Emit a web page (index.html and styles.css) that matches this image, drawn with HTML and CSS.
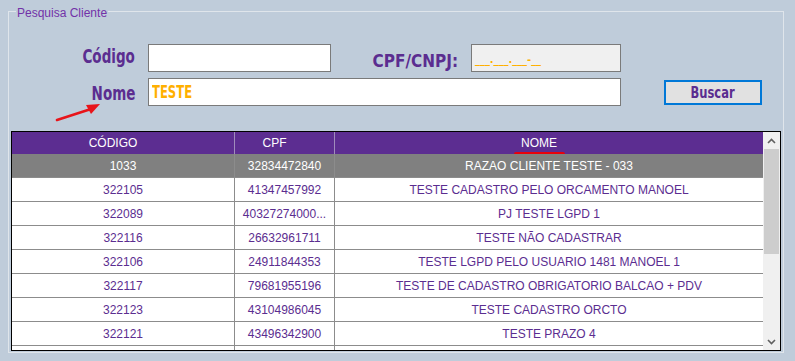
FILE: index.html
```html
<!DOCTYPE html>
<html lang="pt-BR">
<head>
<meta charset="utf-8">
<title>Pesquisa Cliente</title>
<link rel="stylesheet" href="styles.css">
</head>
<body>
<fieldset class="group">
  <legend class="group-title">Pesquisa Cliente</legend>
  <div class="form">
    <label class="lbl lbl-code"><span class="narrow">Código</span></label>
    <div class="input input-code"></div>
    <label class="lbl lbl-cpf"><span class="narrow-cpf">CPF/CNPJ:</span></label>
    <div class="input input-cpf"><span class="mask">___.___.___-__</span></div>
    <label class="lbl lbl-name"><span class="narrow">Nome</span></label>
    <div class="input input-name"><span class="value">TESTE</span></div>
    <button class="btn" type="button"><span class="btn-text">Buscar</span></button>
    <svg class="arrow" width="50" height="22" viewBox="0 0 50 22" aria-hidden="true">
      <line x1="2" y1="19" x2="36" y2="8" stroke="#e8141a" stroke-width="2.6" stroke-linecap="round"/>
      <polygon points="45,3 31,4 36,13" fill="#e8141a"/>
    </svg>
  </div>
  <div class="grid">
    <div class="grid-main">
      <div class="grid-head">
        <div class="cell c1">CÓDIGO</div>
        <div class="cell c2">CPF</div>
        <div class="cell c3"><span class="sorted">NOME</span></div>
      </div>
      <div class="grid-row selected">
        <div class="cell c1">1033</div>
        <div class="cell c2">32834472840</div>
        <div class="cell c3">RAZAO CLIENTE TESTE - 033</div>
      </div>
      <div class="grid-row">
        <div class="cell c1">322105</div>
        <div class="cell c2">41347457992</div>
        <div class="cell c3">TESTE CADASTRO PELO ORCAMENTO MANOEL</div>
      </div>
      <div class="grid-row">
        <div class="cell c1">322089</div>
        <div class="cell c2">40327274000...</div>
        <div class="cell c3">PJ TESTE LGPD 1</div>
      </div>
      <div class="grid-row">
        <div class="cell c1">322116</div>
        <div class="cell c2">26632961711</div>
        <div class="cell c3">TESTE NÃO CADASTRAR</div>
      </div>
      <div class="grid-row">
        <div class="cell c1">322106</div>
        <div class="cell c2">24911844353</div>
        <div class="cell c3">TESTE LGPD PELO USUARIO 1481 MANOEL 1</div>
      </div>
      <div class="grid-row">
        <div class="cell c1">322117</div>
        <div class="cell c2">79681955196</div>
        <div class="cell c3">TESTE DE CADASTRO OBRIGATORIO BALCAO + PDV</div>
      </div>
      <div class="grid-row">
        <div class="cell c1">322123</div>
        <div class="cell c2">43104986045</div>
        <div class="cell c3">TESTE CADASTRO ORCTO</div>
      </div>
      <div class="grid-row">
        <div class="cell c1">322121</div>
        <div class="cell c2">43496342900</div>
        <div class="cell c3">TESTE PRAZO 4</div>
      </div>
      <div class="grid-row">
        <div class="cell c1"></div>
        <div class="cell c2"></div>
        <div class="cell c3"></div>
      </div>
    </div>
    <div class="scrollbar">
      <div class="sb-btn">
        <svg width="9" height="6" viewBox="0 0 9 6" aria-hidden="true"><polyline points="1,5 4.5,1.5 8,5" fill="none" stroke="#606060" stroke-width="1.6"/></svg>
      </div>
      <div class="sb-track"><div class="sb-thumb"></div></div>
      <div class="sb-btn">
        <svg width="9" height="6" viewBox="0 0 9 6" aria-hidden="true"><polyline points="1,1 4.5,4.5 8,1" fill="none" stroke="#606060" stroke-width="1.6"/></svg>
      </div>
    </div>
  </div>
</fieldset>
</body>
</html>
```

FILE: styles.css
```css
html, body {
  margin: 0;
  padding: 0;
}

body {
  width: 795px;
  height: 361px;
  overflow: hidden;
  background: #bfccda;
  padding-top: 3px;
  box-sizing: border-box;
  font-family: "Liberation Sans", Arial, sans-serif;
}

.group {
  margin: 0 11px 0 8px;
  padding: 25px 2px 1px 2px;
  border: 1px solid #dfe5eb;
  min-width: 0;
}

.group-title {
  margin-left: 5px;
  padding: 4px 1px 0 1px;
  line-height: 12px;
  font-size: 12px;
  color: #7232a8;
}

.form {
  position: relative;
  display: grid;
  grid-template-columns: 124px 183px 114px 150px 98px;
  grid-template-rows: 28px 28px;
  column-gap: 13px;
  row-gap: 6px;
  align-items: center;
}

.lbl {
  font-family: "DejaVu Sans Condensed", "DejaVu Sans", sans-serif;
  font-weight: bold;
  color: #5b2d90;
  text-align: right;
  font-size: 20px;
  line-height: 24px;
}

.narrow {
  display: inline-block;
  transform: scaleX(0.75);
  transform-origin: right center;
}

.narrow-cpf {
  display: inline-block;
  font-size: 17px;
}

.lbl-code {
  grid-column: 1;
  grid-row: 1;
  margin-top: -4px;
}

.lbl-name {
  grid-column: 1;
  grid-row: 2;
  margin-top: 2px;
}

.lbl-cpf {
  grid-column: 3;
  grid-row: 1;
  margin-top: 4px;
}

.input {
  height: 28px;
  box-sizing: border-box;
  border: 1px solid #7a7a7a;
  background: #ffffff;
  display: flex;
  align-items: center;
  padding-left: 3px;
}

.input-code {
  grid-column: 2;
  grid-row: 1;
}

.input-cpf {
  grid-column: 4;
  grid-row: 1;
  background: #f0f0f0;
}

.input-name {
  grid-column: 2 / span 3;
  grid-row: 2;
}

.value {
  display: inline-block;
  font-family: "DejaVu Sans Condensed", "DejaVu Sans", sans-serif;
  font-weight: bold;
  font-size: 17px;
  color: #ffb000;
  transform: scaleX(0.76);
  transform-origin: left center;
}

.mask {
  font-family: "DejaVu Sans Condensed", "DejaVu Sans", sans-serif;
  font-weight: bold;
  font-size: 11px;
  color: #ffb000;
  margin-top: 2px;
}

.btn {
  grid-column: 5;
  grid-row: 2;
  margin-left: 30px;
  width: 98px;
  height: 25px;
  box-sizing: border-box;
  border: 2px solid #0078d7;
  background: #e1e1e1;
  font-family: "DejaVu Sans Condensed", "DejaVu Sans", sans-serif;
  font-weight: bold;
  font-size: 16px;
  color: #5b2d90;
  padding: 0;
  align-self: center;
}

.btn-text {
  display: inline-block;
  transform: scaleX(0.8);
}

.arrow {
  position: absolute;
  left: 44px;
  top: 57px;
}

.grid {
  margin-top: 25px;
  height: 220px;
  box-sizing: border-box;
  border: 1px solid #000000;
  display: flex;
  overflow: hidden;
  background: #ffffff;
}

.grid-main {
  flex: 1;
  display: flex;
  flex-direction: column;
  overflow: hidden;
}

.grid-head,
.grid-row {
  display: grid;
  grid-template-columns: 223px 100px 1fr;
  flex: none;
  font-size: 12px;
}

.grid-head {
  height: 22px;
  background: #5c2d91;
  color: #ffffff;
}

.grid-head .cell {
  padding-right: 20px;
  border-right: 1px solid #a08cbc;
}

.grid-head .c3 {
  border-right: none;
}

.grid-row {
  height: 24px;
  box-sizing: border-box;
  border-bottom: 1px solid #8c8c8c;
  color: #5b2d90;
  background: #ffffff;
}

.grid-row.selected {
  background: #808080;
  color: #ffffff;
}

.cell {
  display: flex;
  align-items: center;
  justify-content: center;
  white-space: nowrap;
  overflow: hidden;
  box-sizing: border-box;
}

.grid-row .c1,
.grid-row .c2 {
  border-right: 1px solid #8c8c8c;
}

.sorted {
  position: relative;
}

.sorted::after {
  content: "";
  position: absolute;
  left: -7px;
  right: -8px;
  bottom: -6px;
  height: 4px;
  border-radius: 2px;
  background: #e8000b;
}

.scrollbar {
  width: 17px;
  flex: none;
  background: #f0f0f0;
  display: flex;
  flex-direction: column;
}

.sb-btn {
  height: 17px;
  flex: none;
  display: flex;
  align-items: center;
  justify-content: center;
}

.sb-track {
  flex: 1;
  padding: 0 1px;
}

.sb-thumb {
  height: 105px;
  background: #cdcdcd;
}
```
